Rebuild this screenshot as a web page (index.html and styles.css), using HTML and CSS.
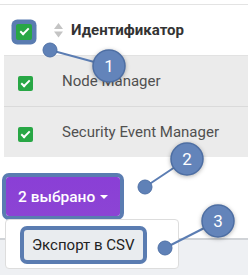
FILE: index.html
```html
<!DOCTYPE html>
<html lang="ru">
<head>
    <meta charset="UTF-8">
    <meta name="viewport" content="width=device-width, initial-scale=1.0">
    <title>Выбор записей</title>
    <link rel="stylesheet" href="styles.css">
</head>
<body>
    <div class="page">
        <!-- таблица -->
        <div class="grid">
            <div class="grid-head">
                <div class="check-cell">
                    <span class="checkbox mark"></span>
                </div>
                <div class="head-title">
                    <svg class="sort-icon" width="9" height="15" viewBox="0 0 9 15">
                        <path d="M4.5 0 L9 6 L0 6 Z" fill="#c4c4c4"/>
                        <path d="M0 8.5 L9 8.5 L4.5 14.5 Z" fill="#c4c4c4"/>
                    </svg>
                    Идентификатор
                </div>
            </div>
            <div class="grid-body">
                <div class="grid-row">
                    <div class="check-cell"><span class="checkbox"></span></div>
                    <div class="row-name">Node Manager</div>
                </div>
                <div class="grid-row">
                    <div class="check-cell"><span class="checkbox"></span></div>
                    <div class="row-name">Security Event Manager</div>
                </div>
            </div>
        </div>

        <!-- панель действий -->
        <div class="toolbar">
            <div class="dropdown">
                <button class="btn-selected mark"><span>2 выбрано</span><span class="caret"></span></button>
                <div class="dropdown-menu">
                    <span class="menu-item mark">Экспорт в CSV</span>
                </div>
            </div>
        </div>

        <div class="footer"></div>

        <!-- выноски -->
        <svg class="callouts" width="248" height="275" viewBox="0 0 248 275">
            <g stroke="#5b7db3" stroke-width="2">
                <line x1="50" y1="50" x2="109" y2="66"/>
                <line x1="145" y1="187" x2="187" y2="159"/>
                <line x1="165" y1="248" x2="218" y2="221"/>
            </g>
            <g class="dot" fill="#5f81b7" stroke="#4f71a6" stroke-width="1">
                <circle cx="50" cy="50" r="7"/>
                <circle cx="145" cy="187" r="7"/>
                <circle cx="165" cy="248" r="7"/>
            </g>
            <g class="badge" fill="#6384ba" stroke="#4d6ea3" stroke-width="1.5">
                <circle cx="109" cy="66" r="16"/>
                <circle cx="187" cy="159" r="16"/>
                <circle cx="218" cy="221" r="16"/>
            </g>
            <g class="badge-num" fill="#fff" text-anchor="middle">
                <text x="109" y="72">1</text>
                <text x="187" y="165">2</text>
                <text x="218" y="227">3</text>
            </g>
        </svg>
    </div>
</body>
</html>
```

FILE: styles.css
```css
body {
    margin: 0;
    font-family: Roboto, "Liberation Sans", Arial, sans-serif;
    background-color: #fff;
    color: #333;
}

.page {
    position: relative;
    width: 248px;
    height: 275px;
    overflow: hidden;
    display: flex;
    flex-direction: column;
}

/* общая подсветка выделенных элементов */
.mark {
    box-shadow: 0 0 0 4px #5a7cb1;
}

.grid {
    margin-top: 4px;
    border-top: 1px solid #e3e3e3;
}

.grid-head {
    height: 50px;
    display: flex;
    align-items: center;
}

.grid-head .check-cell {
    padding-left: 16px;
    padding-top: 3px;
}

.checkbox {
    display: block;
    width: 15px;
    height: 15px;
    border-radius: 2px;
    background-color: #28a745;
    position: relative;
}

.checkbox::after {
    content: "";
    position: absolute;
    left: 3px;
    top: 4px;
    width: 7px;
    height: 3px;
    border-left: 2px solid #fff;
    border-bottom: 2px solid #fff;
    transform: rotate(-45deg);
}

.checkbox.mark {
    width: 16px;
    height: 16px;
    border-radius: 2px;
    box-shadow: 0 0 0 4.5px #5a7cb1;
}

.checkbox.mark::after {
    left: 3.5px;
}

.head-title {
    display: flex;
    align-items: center;
    margin-left: 22px;
    font-size: 15px;
    font-weight: bold;
    color: #333;
}

.sort-icon {
    margin-right: 8px;
}

.grid-body {
    margin-left: 4px;
    background-color: #ebebeb;
    border-top: 1px solid #e2e2e2;
}

.grid-row {
    height: 50px;
    display: flex;
    align-items: center;
}

.grid-row + .grid-row {
    border-top: 1px solid #dadada;
}

.grid-row .check-cell {
    padding-left: 14px;
    padding-top: 4px;
    width: 29px;
}

.row-name {
    margin-left: 15px;
    font-size: 15px;
    color: #505050;
}

.toolbar {
    height: 81px;
    padding-top: 20px;
    box-sizing: border-box;
}

.dropdown {
    position: relative;
    margin-left: 6px;
}

.btn-selected {
    display: flex;
    align-items: center;
    justify-content: space-between;
    box-sizing: border-box;
    width: 114px;
    height: 39px;
    padding: 0 12px;
    border: none;
    border-radius: 3px;
    background: linear-gradient(#8a3fd6, #8c44d4);
    color: #fff;
    font-family: inherit;
    font-size: 15.5px;
    font-weight: 500;
}

.caret {
    width: 0;
    height: 0;
    border-left: 4px solid transparent;
    border-right: 4px solid transparent;
    border-top: 4px solid #fff;
}

.dropdown-menu {
    position: absolute;
    top: 42px;
    left: -1px;
    z-index: 2;
    width: 172px;
    height: 48px;
    background-color: #fff;
    border: 1px solid #ddd;
    border-radius: 4px;
}

.menu-item {
    display: inline-block;
    margin: 10px 0 0 18px;
    width: 119px;
    height: 30px;
    line-height: 30px;
    padding-left: 8px;
    box-sizing: border-box;
    border-radius: 3px;
    background-color: #e9ecef;
    font-size: 15px;
    color: #222;
}

.footer {
    flex: 1;
    border-top: 2px solid #d0d3d7;
    background-color: #eef0f3;
}

.callouts {
    position: absolute;
    left: 0;
    top: 0;
    z-index: 3;
}

.badge {
    filter: drop-shadow(0 1px 2px rgba(0, 0, 0, 0.3));
}

.badge-num {
    font-family: Roboto, sans-serif;
    font-size: 17px;
}
```
